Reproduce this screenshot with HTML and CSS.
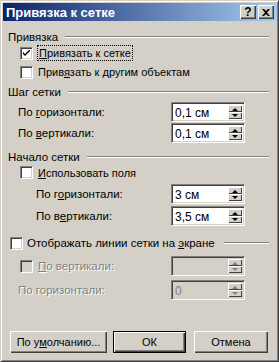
FILE: index.html
```html
<!DOCTYPE html>
<html lang="ru">
<head>
  <meta charset="UTF-8">
  <title>Привязка к сетке</title>
  <link rel="stylesheet" href="styles.css">
</head>
<body>
  <div class="window">
    <div class="titlebar">
      <span class="title">Привязка к сетке</span>
      <div class="title-btns">
        <span class="tbtn">?</span>
        <span class="tbtn">
          <svg width="8" height="7" viewBox="0 0 8 7"><path d="M0 0h2l2 2 2-2h2L5 3.5 8 7H6L4 5 2 7H0l3-3.5z" fill="#000"/></svg>
        </span>
      </div>
    </div>

    <div class="content">
      <div class="group-head h1"><span class="ghead">Привязка</span><i></i></div>
      <div class="row chk-row r-chk1">
        <span class="chk checked"><svg width="7" height="7" viewBox="0 0 7 7"><path d="M0 2l2 2 5-5v2L2 6 0 4z" fill="#000"/></svg></span>
        <span class="focus"><u>П</u>ривязать к сетке</span>
      </div>
      <div class="row chk-row r-chk2">
        <span class="chk"></span>
        <span>Прив<u>я</u>зать к другим объектам</span>
      </div>

      <div class="group-head h2"><span class="ghead">Шаг сетки</span><i></i></div>
      <div class="row field-row r-f1">
        <span class="lbl ind1">По <u>г</u>оризонтали:</span>
        <div class="spin"><span class="val">0,1 см</span><div class="arrows"><b class="up"></b><b class="dn"></b></div></div>
      </div>
      <div class="row field-row r-f2">
        <span class="lbl ind1">По <u>в</u>ертикали:</span>
        <div class="spin"><span class="val">0,1 см</span><div class="arrows"><b class="up"></b><b class="dn"></b></div></div>
      </div>

      <div class="group-head h3"><span class="ghead">Начало сетки</span><i></i></div>
      <div class="row chk-row r-chk3">
        <span class="chk"></span>
        <span><u>И</u>спользовать поля</span>
      </div>
      <div class="row field-row r-f3">
        <span class="lbl ind2">По г<u>о</u>ризонтали:</span>
        <div class="spin"><span class="val">3 см</span><div class="arrows"><b class="up"></b><b class="dn"></b></div></div>
      </div>
      <div class="row field-row r-f4">
        <span class="lbl ind2">По в<u>е</u>ртикали:</span>
        <div class="spin"><span class="val">3,5 см</span><div class="arrows"><b class="up"></b><b class="dn"></b></div></div>
      </div>

      <div class="group-head h4">
        <span class="chk"></span>
        <span class="ghead">Отображать линии сетки на <u>э</u>кране</span><i></i>
      </div>
      <div class="row field-row r-f5 disabled">
        <div class="chk-row">
          <span class="chk dis"></span>
          <span class="lbl"><u>П</u>о вертикали:</span>
        </div>
        <div class="spin"><span class="val"></span><div class="arrows"><b class="up"></b><b class="dn"></b></div></div>
      </div>
      <div class="row field-row r-f6 disabled">
        <span class="lbl ind1">По горизонтали:</span>
        <div class="spin"><span class="val">0</span><div class="arrows"><b class="up"></b><b class="dn"></b></div></div>
      </div>

      <div class="buttons">
        <span class="btn b-def">По у<u>м</u>олчанию...</span>
        <span class="btn b-ok">ОК</span>
        <span class="btn b-cancel">Отмена</span>
      </div>
    </div>
  </div>
</body>
</html>
```

FILE: styles.css
```css
* { box-sizing: border-box; margin: 0; padding: 0; }
body {
  font-family: "Liberation Sans", Arial, sans-serif;
  font-size: 11px;
  color: #000;
  background: #d4d0c8;
}
.window {
  width: 279px;
  height: 362px;
  background: #d4d0c8;
  border: 1px solid;
  border-color: #d4d0c8 #404040 #404040 #d4d0c8;
  box-shadow: inset 1px 1px 0 #fff, inset -1px -1px 0 #808080;
  display: flex;
  flex-direction: column;
}

.titlebar {
  height: 18px;
  margin: 2px 1px 0 2px;
  background: linear-gradient(to right, #0a246a, #a6caf0);
  display: flex;
  align-items: center;
  justify-content: space-between;
  padding: 0 3px 0 3px;
}
.title {
  color: #fff;
  font-weight: bold;
  font-size: 13px;
}
.title-btns { display: flex; gap: 2px; }
.tbtn {
  width: 16px;
  height: 14px;
  background: #d4d0c8;
  display: flex;
  align-items: center;
  justify-content: center;
  font-weight: bold;
  font-size: 12px;
  box-shadow: inset 1px 1px 0 #fff, inset -1px -1px 0 #404040, inset -2px -2px 0 #808080;
}

.content { position: relative; flex: 1; padding: 0 9px 0 7px; }

.group-head {
  display: flex;
  align-items: center;
  height: 14px;
}
.ghead { font-size: 11.5px; }
.group-head i {
  flex: 1;
  height: 2px;
  border-top: 1px solid #808080;
  border-bottom: 1px solid #fff;
  margin-left: 7px;
}
.h1 { margin-top: 9px; }
.h2 { margin-top: 4px; }
.h3 { margin-top: 7px; }
.h4 { margin-top: 10px; padding-left: 2px; }
.h4 .chk { margin-right: 4px; }
.h4 i { flex: 0 0 45px; margin-left: auto; }

.row { display: flex; align-items: center; }
.chk-row { display: flex; align-items: center; }
.r-chk1 { height: 18px; padding-left: 12px; }
.r-chk2 { height: 18px; margin-top: 1px; padding-left: 12px; }
.r-chk3 { height: 17px; padding-left: 12px; }
.chk-row .chk { margin-right: 5px; }

.chk {
  width: 13px;
  height: 13px;
  background: #fff;
  display: inline-flex;
  align-items: center;
  justify-content: center;
  border: 1px solid;
  border-color: #808080 #fff #fff #808080;
  box-shadow: inset 1px 1px 0 #404040, inset -1px -1px 0 #d4d0c8;
}
.chk.dis { background: #d4d0c8; }
.focus { outline: 1px dotted #000; padding: 1px 1px; }

.field-row { justify-content: space-between; padding-right: 24px; }
.lbl { font-size: 11.5px; }
.r-f1 { height: 20px; margin-top: 3px; }
.r-f2 { height: 20px; margin-top: 1px; }
.r-f3 { height: 20px; margin-top: 3px; }
.r-f4 { height: 20px; margin-top: 2px; }
.r-f5 { height: 20px; margin-top: 6px; padding-left: 12px; }
.r-f6 { height: 20px; margin-top: 4px; }
.ind1 { padding-left: 10px; }
.ind2 { padding-left: 28px; }
.disabled .lbl { color: #808080; text-shadow: 1px 1px 0 #fff; }

.spin {
  width: 74px;
  height: 20px;
  background: #fff;
  display: flex;
  align-items: stretch;
  border: 1px solid;
  border-color: #808080 #fff #fff #808080;
  box-shadow: inset 1px 1px 0 #404040, inset -1px -1px 0 #d4d0c8;
  padding: 2px;
}
.disabled .spin { background: #d4d0c8; }
.spin .val { flex: 1; padding-left: 1px; line-height: 16px; font-size: 12px; }
.disabled .val { color: #808080; }
.arrows { display: flex; flex-direction: column; width: 14px; }
.arrows b {
  flex: 1;
  background: #d4d0c8;
  box-shadow: inset 1px 1px 0 #fff, inset -1px -1px 0 #404040;
  position: relative;
}
.arrows b::after {
  content: "";
  position: absolute;
  left: 4px;
  top: 3px;
  border-left: 3px solid transparent;
  border-right: 3px solid transparent;
}
.arrows .up::after { border-bottom: 3px solid #000; }
.arrows .dn::after { border-top: 3px solid #000; top: 2px; }
.disabled .arrows .up::after { border-bottom-color: #808080; }
.disabled .arrows .dn::after { border-top-color: #808080; }

.buttons {
  position: absolute;
  left: 0;
  bottom: 8px;
  display: flex;
  padding-left: 9px;
}
.btn {
  height: 22px;
  display: flex;
  align-items: center;
  justify-content: center;
  background: #d4d0c8;
  box-shadow: inset 1px 1px 0 #fff, inset -1px -1px 0 #404040, inset -2px -2px 0 #808080;
}
.b-def { width: 97px; }
.b-ok { width: 73px; margin-left: 6px; border: 1px solid #000; }
.b-cancel { width: 74px; margin-left: 8px; }
```
